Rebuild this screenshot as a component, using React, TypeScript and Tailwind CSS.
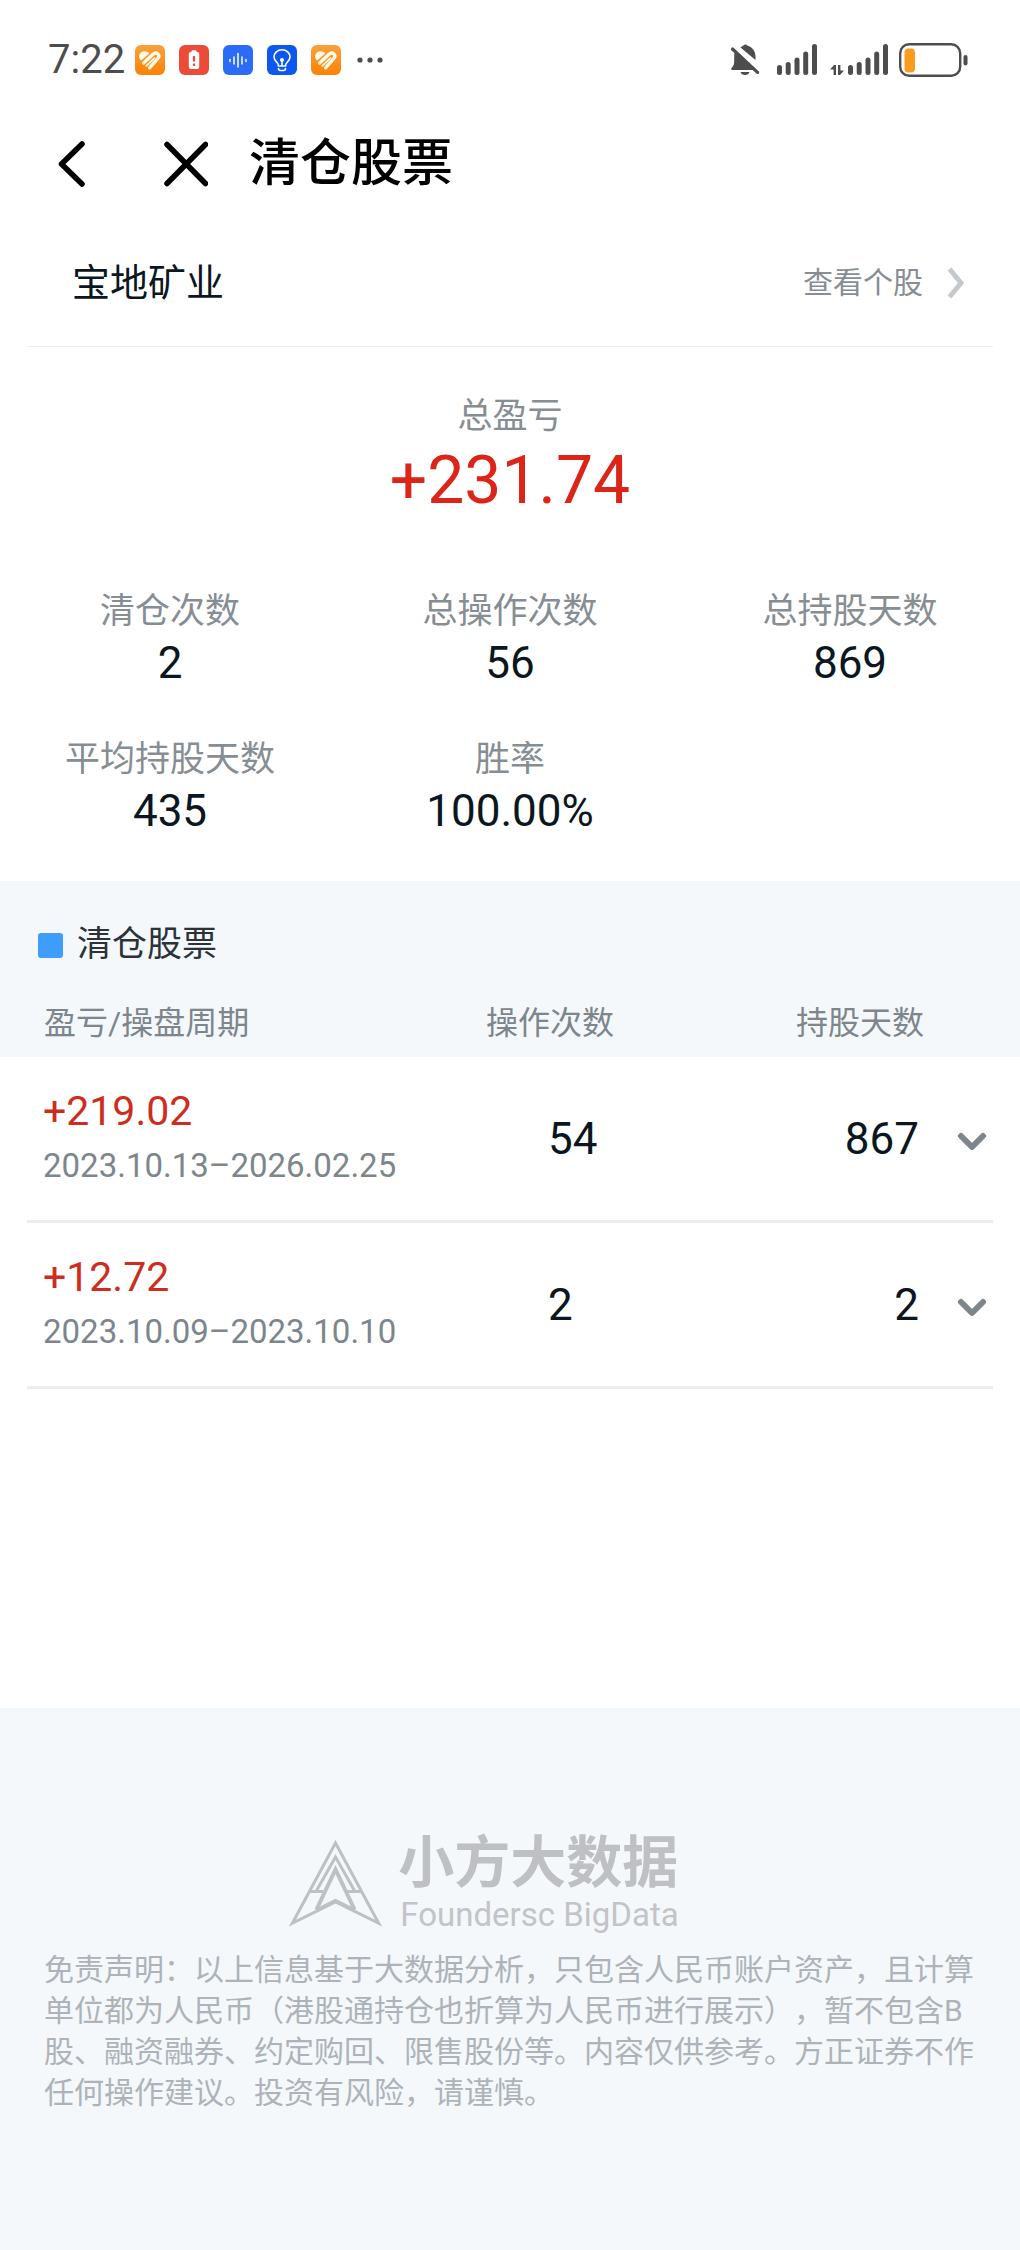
import { useState } from "react";

const STATS = [
  { label: "清仓次数", value: "2" },
  { label: "总操作次数", value: "56" },
  { label: "总持股天数", value: "869" },
  { label: "平均持股天数", value: "435" },
  { label: "胜率", value: "100.00%" },
];

const ROUNDS = [
  { profit: "+219.02", period: "2023.10.13–2026.02.25", trades: "54", days: "867" },
  { profit: "+12.72", period: "2023.10.09–2023.10.10", trades: "2", days: "2" },
];

const HeartIcon = ({ id }: { id: string }) => (
  <svg width="30" height="30" viewBox="0 0 30 30" aria-hidden="true">
    <defs>
      <linearGradient id={id} x1="0" y1="0" x2="0" y2="1">
        <stop offset="0" stopColor="#f9a03c" />
        <stop offset="1" stopColor="#fd8204" />
      </linearGradient>
    </defs>
    <rect width="30" height="30" rx="6" fill={`url(#${id})`} />
    <path d="M6 15.600C2.600 12.500 4 6.500 9.200 6.300c2.300 0 4 .900 5.200 2.200Z" fill="#fffbe8" />
    <path d="M8.600 18 18.300 9c3.300-2.800 7.400 1 4.600 4.400L14.600 22.800" fill="none" stroke="#fffbe8" strokeWidth="3.300" strokeLinecap="round" strokeLinejoin="round" />
    <path d="M11.300 20.800 19.600 13" fill="none" stroke="#fffbe8" strokeWidth="1.800" strokeLinecap="round" />
  </svg>
);

const BatteryAlertIcon = () => (
  <svg width="30" height="30" viewBox="0 0 30 30" aria-hidden="true">
    <rect width="30" height="30" rx="6" fill="#ec4c37" />
    <rect x="12.500" y="5.200" width="5" height="3" rx="1" fill="#fff" />
    <rect x="9.800" y="7" width="10.400" height="17" rx="2" fill="#fff" />
    <path d="M15 11v5.500M15 18.500v2.500" stroke="#ec4c37" strokeWidth="2.200" />
  </svg>
);

const WaveIcon = () => (
  <svg width="30" height="30" viewBox="0 0 30 30" aria-hidden="true">
    <rect width="30" height="30" rx="6" fill="#2b6bf6" />
    <path d="M7 14.500v2M11 12v7M15 8.500v13.500M19 12v7M23 14.500v2" stroke="#fff" strokeWidth="1.500" strokeLinecap="round" />
  </svg>
);

const BulbIcon = () => (
  <svg width="30" height="30" viewBox="0 0 30 30" aria-hidden="true">
    <rect width="30" height="30" rx="6" fill="#0b57f0" />
    <g fill="none" stroke="#fff" strokeWidth="1.600" strokeLinecap="round" strokeLinejoin="round">
      <path d="M11.300 21v-1.500c0-1.500-4.300-3.500-4.300-7.500a8 7.300 0 0 1 16 0c0 4-4.300 6-4.300 7.500V21Z" />
      <path d="M11.500 23.500c0 1.300 1 2 2 2h3c1 0 2-.700 2-2" />
      <path d="M15 15.500v5" />
    </g>
    <circle cx="15" cy="15" r="2" fill="#fff" />
  </svg>
);

const MutedBellIcon = () => (
  <svg width="30" height="34" viewBox="0 0 30 34" fill="#4d4d4d" aria-label="静音">
    <path d="M10.500 4.500C11.700 3.400 13 3 13.500 2.500c.800-1.500 3-1.500 3.800 0 5 1.500 8.200 5.500 8.200 11v3.500Z" />
    <path d="M5.300 8.500 23.500 25.500V27H2.500c-1.500 0-1.700-1.700-.600-2.600C3.900 22.600 4.200 20.500 4.200 18v-5.500c0-1.500.400-3 1.100-4Z" />
    <path d="M2.500 6 27.500 29.300" stroke="#4d4d4d" strokeWidth="3.200" strokeLinecap="round" />
    <path d="M10.500 29h9c-.500 2-2.200 3-4.500 3s-4-1-4.500-3Z" />
  </svg>
);

const SignalIcon = () => (
  <svg width="41" height="34" viewBox="0 0 41 34" aria-label="信号">
    <path d="M2.500 24.500v5M11.200 21.500v8M20 17v12.500M28.700 11v18.500M37.500 3.500v26" stroke="#4d4d4d" strokeWidth="5" strokeLinecap="round" />
  </svg>
);

const DataIcon = () => (
  <svg width="14" height="34" viewBox="0 0 14 34" fill="#4d4d4d" aria-hidden="true">
    <path d="M0 26.500 4 22h2v10H3.600v-5.500ZM8 22h2.400v5.500H14L10 32H8Z" />
  </svg>
);

const LowBatteryIcon = () => (
  <svg width="69" height="36" viewBox="0 0 69 36" aria-label="电量低">
    <rect x="1.200" y="2.200" width="60" height="31.600" rx="9" fill="none" stroke="#4d4d4d" strokeWidth="2.400" />
    <rect x="5.500" y="6.500" width="10.500" height="24" rx="4" fill="#fd9b20" />
    <rect x="64.500" y="13" width="4" height="10.500" rx="2" fill="#4d4d4d" />
  </svg>
);

const StatusBar = () => (
  <div className="flex h-[120px] items-center justify-between pl-12 pr-[52px] text-[#4d4d4d]">
    <div className="flex items-center gap-[14px]">
      <span className="w-[73px] text-[40px] leading-[50px]">7:22</span>
      <HeartIcon id="heart-a" />
      <BatteryAlertIcon />
      <WaveIcon />
      <BulbIcon />
      <HeartIcon id="heart-b" />
      <svg className="ml-[2px]" width="26" height="6" viewBox="0 0 26 6" fill="#4d4d4d" aria-hidden="true">
        <circle cx="3" cy="3" r="2.600" />
        <circle cx="13" cy="3" r="2.600" />
        <circle cx="23" cy="3" r="2.600" />
      </svg>
    </div>
    <div className="flex items-center">
      <MutedBellIcon />
      <div className="ml-[17px]"><SignalIcon /></div>
      <div className="ml-3 flex gap-1"><DataIcon /><SignalIcon /></div>
      <div className="ml-[10px]"><LowBatteryIcon /></div>
    </div>
  </div>
);

const TitleBar = () => (
  <header className="flex h-[88px] items-center pl-14">
    <button aria-label="返回" className="w-[108px]">
      <svg width="32" height="48" viewBox="0 0 32 48" fill="none" stroke="#000" strokeWidth="5.500" strokeLinecap="round" strokeLinejoin="round">
        <path d="M26 4 5.500 24 26 44" />
      </svg>
    </button>
    <button aria-label="关闭" className="w-[85px]">
      <svg width="44" height="48" viewBox="0 0 44 48" fill="none" stroke="#000" strokeWidth="5.500" strokeLinecap="round">
        <path d="M3 4.500 41.500 43.500M41.500 4.500 3 43.500" />
      </svg>
    </button>
    <h1 className="text-[51px] font-medium leading-[60px] text-black">清仓股票</h1>
  </header>
);

const RoundRow = ({ profit, period, trades, days }: (typeof ROUNDS)[number]) => {
  const [open, setOpen] = useState(false);

  return (
    <tr>
      <td className="p-0 pl-[27px]">
        <div className="flex h-[166px] flex-col border-b-[3px] border-[#eaeef2] pl-4 pt-6">
          <span className="text-[41px] leading-[60px] text-[#cf2c20]">{profit}</span>
          <span className="text-[33px] leading-[50px] text-[#7d868c]">{period}</span>
        </div>
      </td>
      <td className="p-0">
        <div className="flex h-[166px] items-center border-b-[3px] border-[#eaeef2] pl-[62px]">{trades}</div>
      </td>
      <td className="p-0 pr-[27px]">
        <div className="flex h-[166px] items-center justify-end border-b-[3px] border-[#eaeef2] pr-1">
          {days}
          <button aria-label="展开明细" aria-expanded={open} onClick={() => setOpen(!open)} className="ml-9">
            <svg width="34" height="24" viewBox="0 0 34 24" fill="none" stroke="#7f868b" strokeWidth="6" strokeLinecap="round" strokeLinejoin="round">
              <path d="M6 9 17 20 28 9" />
            </svg>
          </button>
        </div>
      </td>
    </tr>
  );
};

const Brand = () => (
  <div className="flex items-end justify-center pr-[52px]">
    <svg className="mb-[10px]" width="93" height="87" viewBox="0 0 93 87" fill="none" stroke="#bfc0c3" strokeWidth="3" aria-hidden="true">
      <path d="M46.500 3 89.500 83 46.500 62 3.500 83Z" />
      <path d="M27 51.500 46.500 17 66 51.500" />
      <path d="M27.500 69.500 46.500 29.500 65.500 69.500" strokeWidth="4" />
      <path d="M20 51.500H34M59 51.500H73" />
      <path d="M27 70 46.500 60.500 66 70" />
    </svg>
    <div className="ml-4">
      <p className="text-[56px] font-bold leading-[60px] text-[#bfc0c3]">小方大数据</p>
      <p className="pl-[2px] text-[33px] leading-[44px] text-[#c3c4c7]">Foundersc BigData</p>
    </div>
  </div>
);

export default function App() {
  return (
    <div lang="zh-CN" className="flex min-h-screen flex-col bg-white font-[Roboto,'Noto_Sans_CJK_SC',sans-serif] text-[#0b1620]">
      <StatusBar />
      <TitleBar />

      <main className="flex-1">
        <section className="mx-[27px] flex h-[139px] items-center justify-between border-b border-[#ebedef] pl-[45px] pr-7 pt-3">
          <h2 className="text-[38px] leading-[50px]">宝地矿业</h2>
          <a href="#stock" className="flex items-center gap-6 text-[30px] leading-[40px] text-[#868d93]">
            查看个股
            <svg width="18" height="32" viewBox="0 0 18 32" fill="none" stroke="#c6c9cc" strokeWidth="5" aria-hidden="true">
              <path d="M2.500 2 14 16 2.500 30" />
            </svg>
          </a>
        </section>

        <section className="pt-[46px] text-center">
          <p className="text-[35px] leading-[48px] text-[#868d93]">总盈亏</p>
          <p className="text-[66px] leading-[80px] text-[#dd2418]">+231.74</p>
          <dl className="grid grid-cols-3 gap-y-[46px] pb-[44px] pt-[66px]">
            {STATS.map((s) => (
              <div key={s.label}>
                <dt className="text-[35px] leading-[50px] text-[#868d93]">{s.label}</dt>
                <dd className="text-[44px] leading-[52px]">{s.value}</dd>
              </div>
            ))}
          </dl>
        </section>

        <section>
          <div className="flex h-[120px] items-center gap-[14px] bg-[#f4f8fb] pl-[38px] pt-2">
            <span className="size-[25px] rounded-[3px] bg-[#3f9dfd]" />
            <h2 className="text-[35px] leading-[50px] text-[#2b3238]">清仓股票</h2>
          </div>
          <table className="w-full table-fixed border-collapse text-left text-[44px] leading-[52px]">
            <colgroup>
              <col />
              <col className="w-[214px]" />
              <col className="w-[320px]" />
            </colgroup>
            <thead className="bg-[#f4f8fb] text-[32px] text-[#7d868c]">
              <tr className="h-14">
                <th className="p-0 pb-3 pl-11 font-normal leading-[44px]">盈亏/操盘周期</th>
                <th className="p-0 pb-3 font-normal leading-[44px]">操作次数</th>
                <th className="p-0 pb-3 pr-24 text-right font-normal leading-[44px]">持股天数</th>
              </tr>
            </thead>
            <tbody>
              {ROUNDS.map((r) => (
                <RoundRow key={r.period} {...r} />
              ))}
            </tbody>
          </table>
        </section>
      </main>

      <footer className="bg-[#f4f8fb] px-11 pb-[137px] pt-[125px]">
        <Brand />
        <p className="mt-3 text-[30px] leading-[41px] text-[#adb3b8] [text-spacing-trim:space-all]">
          免责声明：以上信息基于大数据分析，只包含人民币账户资产，且计算单位都为人民币（港股通持仓也折算为人民币进行展示），暂不包含B股、融资融券、约定购回、限售股份等。内容仅供参考。方正证券不作任何操作建议。投资有风险，请谨慎。
        </p>
      </footer>
    </div>
  );
}
